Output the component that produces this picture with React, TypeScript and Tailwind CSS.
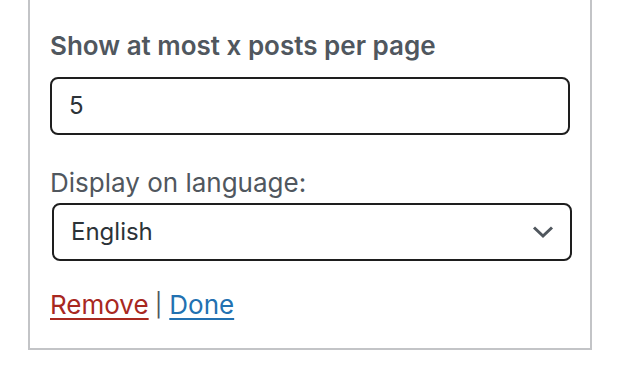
export default function App() {
  return (
    <div className="w-[620px] h-[372px] bg-white font-['Inter',sans-serif]">
      <div className="ml-[28px] w-[564px] h-[350px] border-x-2 border-b-2 border-[#c3c4c7] px-[20px] pt-[30px] flex flex-col">
        <label className="block text-[26px] leading-[32px] font-semibold text-[#50575e]">
          Show at most x posts per page
        </label>
        <div className="mt-[15px] h-[58px] border-2 border-[#1e1e1e] rounded-[8px] flex items-center pl-[17px] text-[24px] text-[#2c3338]">
          5
        </div>
        <label className="block mt-[32px] text-[26px] leading-[32px] text-[#50575e]">
          Display on language:
        </label>
        <div className="mt-[4px] ml-[2px] w-[520px] h-[58px] border-2 border-[#1e1e1e] rounded-[8px] flex items-center justify-between pl-[17px] pr-[16px] text-[24px] text-[#2c3338]">
          <span>English</span>
          <svg width="22" height="14" viewBox="0 0 22 14" fill="none">
            <path d="M2 2.5L11 11L20 2.5" stroke="#50575e" strokeWidth="3" />
          </svg>
        </div>
        <div className="mt-[28px] flex items-center text-[26px] leading-[32px] text-[#50575e]">
          <a href="#" className="text-[#a8281f] underline decoration-2 underline-offset-[4px]">Remove</a>
          <span className="ml-[6px] mr-[7px] text-[23px]">|</span>
          <a href="#" className="text-[#2271b1] underline decoration-2 underline-offset-[4px]">Done</a>
        </div>
      </div>
    </div>
  );
}
